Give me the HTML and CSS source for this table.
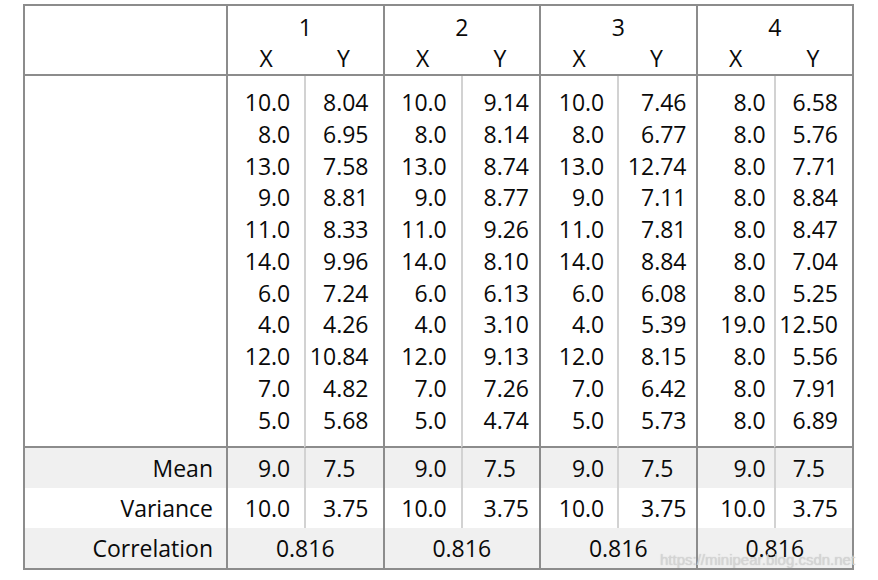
FILE: index.html
```html
<!DOCTYPE html>
<html lang="en">
  <head>
    <meta charset="UTF-8" />
    <meta name="viewport" content="width=device-width, initial-scale=1.0" />
    <title>Anscombe's quartet</title>
    <link rel="stylesheet" href="styles.css">
  </head>

  <body>
    <div class="sheet">
      <div class="corner"></div>
      <div class="grp">1</div>
      <div class="grp">2</div>
      <div class="grp">3</div>
      <div class="grp">4</div>

      <div class="hd x">X</div>
      <div class="hd">Y</div>
      <div class="hd x">X</div>
      <div class="hd">Y</div>
      <div class="hd x">X</div>
      <div class="hd">Y</div>
      <div class="hd x">X</div>
      <div class="hd">Y</div>

      <!-- data -->
      <div class="blank"></div>
      <div class="nums x p14">10.0<br>8.0<br>13.0<br>9.0<br>11.0<br>14.0<br>6.0<br>4.0<br>12.0<br>7.0<br>5.0</div>
      <div class="nums y p14">8.04<br>6.95<br>7.58<br>8.81<br>8.33<br>9.96<br>7.24<br>4.26<br>10.84<br>4.82<br>5.68</div>
      <div class="nums x p14">10.0<br>8.0<br>13.0<br>9.0<br>11.0<br>14.0<br>6.0<br>4.0<br>12.0<br>7.0<br>5.0</div>
      <div class="nums y p10">9.14<br>8.14<br>8.74<br>8.77<br>9.26<br>8.10<br>6.13<br>3.10<br>9.13<br>7.26<br>4.74</div>
      <div class="nums x p13">10.0<br>8.0<br>13.0<br>9.0<br>11.0<br>14.0<br>6.0<br>4.0<br>12.0<br>7.0<br>5.0</div>
      <div class="nums y p9">7.46<br>6.77<br>12.74<br>7.11<br>7.81<br>8.84<br>6.08<br>5.39<br>8.15<br>6.42<br>5.73</div>
      <div class="nums x p8">8.0<br>8.0<br>8.0<br>8.0<br>8.0<br>8.0<br>8.0<br>19.0<br>8.0<br>8.0<br>8.0</div>
      <div class="nums y p14">6.58<br>5.76<br>7.71<br>8.84<br>8.47<br>7.04<br>5.25<br>12.50<br>5.56<br>7.91<br>6.89</div>

      <!-- summary -->
      <div class="label shade">Mean</div>
      <div class="stat x shade p14">9.0</div>
      <div class="stat y shade s14">7.5</div>
      <div class="stat x shade p14">9.0</div>
      <div class="stat y shade s10">7.5</div>
      <div class="stat x shade p13">9.0</div>
      <div class="stat y shade s9">7.5</div>
      <div class="stat x shade p8">9.0</div>
      <div class="stat y shade s14">7.5</div>

      <div class="label">Variance</div>
      <div class="stat x p14">10.0</div>
      <div class="stat y p14">3.75</div>
      <div class="stat x p14">10.0</div>
      <div class="stat y p10">3.75</div>
      <div class="stat x p13">10.0</div>
      <div class="stat y p9">3.75</div>
      <div class="stat x p8">10.0</div>
      <div class="stat y p14">3.75</div>

      <div class="label shade">Correlation</div>
      <div class="corr shade">0.816</div>
      <div class="corr shade">0.816</div>
      <div class="corr shade">0.816</div>
      <div class="corr shade">0.816</div>
    </div>

    <div class="mark">https://minipear.blog.csdn.net</div>
  </body>
</html>
```

FILE: styles.css
```css
body {
  margin: 0;
  background-color: #ffffff;
  font-family: 'Open Sans', 'Noto Sans', sans-serif;
  color: #0a0a0a;
}

.sheet {
  display: grid;
  grid-template-columns: 201px repeat(8, 1fr);
  width: 827px;
  margin: 4px 0 0 23px;
  border: 2px solid #8c8c8c;
  font-size: 23px;
}

.sheet > div {
  box-sizing: border-box;
}

.corner {
  grid-row: span 2;
  border-bottom: 2px solid #8c8c8c;
}

.grp {
  grid-column: span 2;
  text-align: center;
  padding-top: 6px;
  line-height: 31px;
  border-left: 2px solid #8c8c8c;
}

.hd {
  text-align: center;
  line-height: 31px;
  border-bottom: 2px solid #8c8c8c;
}

.x {
  border-left: 2px solid #8c8c8c;
}

.y {
  border-left: 2px solid #d2d2d2;
}

.blank,
.nums {
  border-bottom: 2px solid #8c8c8c;
}

.nums {
  text-align: right;
  line-height: 31.75px;
  padding-top: 11px;
  padding-bottom: 9.75px;
}

.label {
  text-align: right;
  padding-right: 13px;
  line-height: 40px;
}

.stat {
  text-align: right;
  line-height: 40px;
}

.corr {
  grid-column: span 2;
  text-align: center;
  line-height: 40px;
  border-left: 2px solid #8c8c8c;
}

.shade {
  background-color: #f0f0f0;
}

.p8 { padding-right: 8px; }
.p9 { padding-right: 9px; }
.p10 { padding-right: 10px; }
.p13 { padding-right: 13px; }
.p14 { padding-right: 14px; }

/* one decimal in a two-decimal column: add a digit so the points line up */
.s9 { padding-right: 22px; }
.s10 { padding-right: 23px; }
.s14 { padding-right: 27px; }

.mark {
  position: absolute;
  left: 660px;
  top: 551px;
  font-family: 'Liberation Sans', Arial, sans-serif;
  font-size: 15px;
  color: rgba(214, 214, 214, 0.9);
  text-shadow: 0 0 1px rgba(150, 150, 150, 0.5);
}
```
